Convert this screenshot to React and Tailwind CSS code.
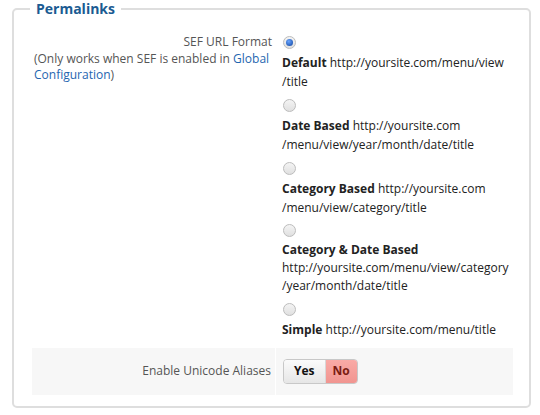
const options = [
  { label: 'Default', lines: ['http://yoursite.com/menu/view', '/title'], checked: true },
  { label: 'Date Based', lines: ['http://yoursite.com', '/menu/view/year/month/date/title'] },
  { label: 'Category Based', lines: ['http://yoursite.com', '/menu/view/category/title'] },
  { label: 'Category & Date Based', lines: ['', 'http://yoursite.com/menu/view/category', '/year/month/date/title'], tight: true },
  { label: 'Simple', lines: ['http://yoursite.com/menu/title'] },
]

function Radio({ checked }) {
  return (
    <span className="w-[13px] h-[13px] rounded-full border border-[#bcbcbc] bg-gradient-to-b from-[#f4f4f4] to-[#e0e0e0] flex items-center justify-center">
      {checked && (
        <span className="w-[7px] h-[7px] rounded-full bg-[radial-gradient(circle_at_40%_35%,#6aa6ff,#0b3f9c)]" />
      )}
    </span>
  )
}

export default function App() {
  return (
    <div className="w-[540px] h-[415px] bg-white pt-[2px] pl-[12px] pr-[9px] font-['Open_Sans',sans-serif] text-[12px]">
      <fieldset className="border-2 border-[#dedede] rounded-[5px] pl-[18px] pr-[16px] pb-[11px] m-0 min-w-0">
        <legend className="-ml-[2px] px-[6px] text-[14px] font-bold text-[#1b5b92] leading-[14px]">Permalinks</legend>

        {/* SEF URL format */}
        <div className="flex mt-[14px]">
          <div className="w-[240px] shrink-0 pl-[2px] text-[#555] leading-[16px] pt-[4px] whitespace-nowrap">
            <div className="text-right">SEF URL Format</div>
            <div className="mt-[1px]">
              (Only works when SEF is enabled in <span className="text-[#1f66b0]">Global</span>
              <br />
              <span className="text-[#1f66b0]">Configuration</span>)
            </div>
          </div>
          <div className="ml-[10px] text-[#222]">
            {options.map(({ label, lines, checked, tight }) => (
              <div key={label} className="mb-[2px]">
                <div className={`${tight ? 'h-[22px]' : 'h-[24px]'} flex items-center pl-[1px]`}>
                  <Radio checked={checked} />
                </div>
                <div className={tight ? 'leading-[18px]' : 'leading-[18.5px]'}>
                  {lines.map((l, i) => (
                    <div key={i}>
                      {i === 0 && <span className="font-bold">{label} </span>}
                      {l}
                    </div>
                  ))}
                </div>
              </div>
            ))}
          </div>
        </div>

        {/* Unicode aliases */}
        <div className="flex mt-[6px] bg-[#f7f7f7] h-[47px]">
          <div className="w-[244px] shrink-0 flex items-center justify-end pr-[4px] text-[#555] border-r border-white">
            Enable Unicode Aliases
          </div>
          <div className="flex items-center pl-[7px]">
            <div className="flex h-[25px] rounded-[4px] border border-[#c8c8c8] overflow-hidden font-bold text-[12px]">
              <span className="px-[10px] flex items-center bg-gradient-to-b from-[#fbfbfb] to-[#e6e6e6] text-[#111] border-r border-[#d8d8d8]">Yes</span>
              <span className="px-[7px] flex items-center bg-gradient-to-b from-[#f9aaa6] to-[#f19590] text-[#7a1c12]">No</span>
            </div>
          </div>
        </div>
      </fieldset>
    </div>
  )
}
